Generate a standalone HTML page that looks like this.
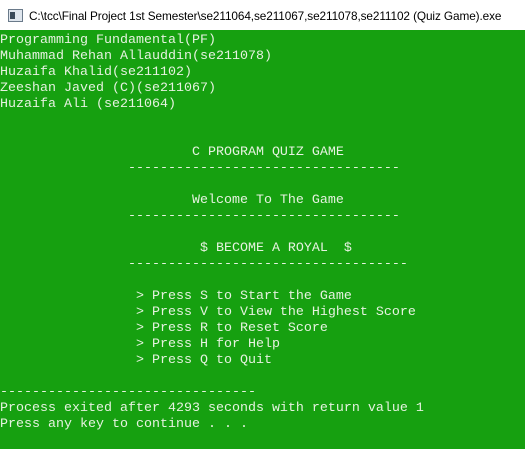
<!DOCTYPE html>
<html><head><meta charset="utf-8"><style>
html,body{margin:0;padding:0;width:525px;height:449px;overflow:hidden;background:#fff}
.title{height:30px;background:#fff;position:relative;font-family:"Liberation Sans",sans-serif;font-size:11.8px;letter-spacing:-0.1px;color:#000;box-sizing:border-box}
.title .t{position:absolute;left:29px;top:9px;white-space:nowrap}
.ico{position:absolute;left:8px;top:9px;width:13px;height:11px;border:1px solid #6a7a8a;background:#dfe6ee}
.ico:after{content:"";position:absolute;left:1px;top:2px;width:5px;height:7px;background:#3a4a5a}
.con{position:absolute;top:30px;left:0;width:525px;height:419px;background:#16a010;padding-top:3px;box-sizing:border-box}
pre{margin:0;font-family:"Liberation Mono",monospace;font-size:13.33px;line-height:16px;color:#e6f2e0;white-space:pre}
</style></head><body>
<div class="title"><div class="ico"></div><div class="t">C:\tcc\Final Project 1st Semester\se211064,se211067,se211078,se211102 (Quiz Game).exe</div></div>
<div class="con"><pre>Programming Fundamental(PF)
Muhammad Rehan Allauddin(se211078)
Huzaifa Khalid(se211102)
Zeeshan Javed (C)(se211067)
Huzaifa Ali (se211064)


                        C PROGRAM QUIZ GAME
                ----------------------------------

                        Welcome To The Game
                ----------------------------------

                         $ BECOME A ROYAL  $
                -----------------------------------

                 &gt; Press S to Start the Game
                 &gt; Press V to View the Highest Score
                 &gt; Press R to Reset Score
                 &gt; Press H for Help
                 &gt; Press Q to Quit

--------------------------------
Process exited after 4293 seconds with return value 1
Press any key to continue . . .</pre></div>
</body></html>
